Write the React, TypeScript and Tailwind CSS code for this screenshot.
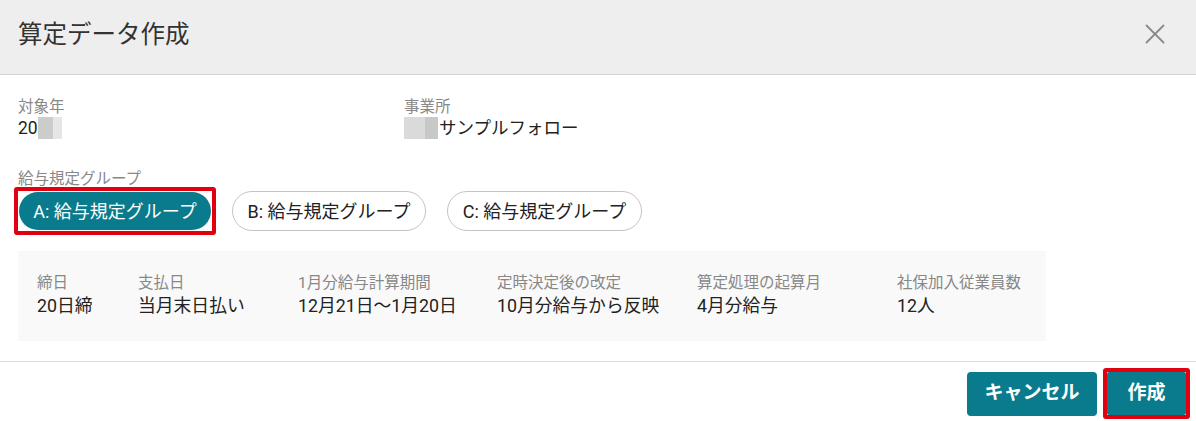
import { X } from 'lucide-react';

const font = { fontFamily: 'Roboto, "Noto Sans CJK JP", sans-serif' };

const details = [
  { label: '締日', value: '20日締', w: 'w-[101px]' },
  { label: '支払日', value: '当月末日払い', w: 'w-[160px]' },
  { label: '1月分給与計算期間', value: '12月21日〜1月20日', w: 'w-[199px]' },
  { label: '定時決定後の改定', value: '10月分給与から反映', w: 'w-[200px]' },
  { label: '算定処理の起算月', value: '4月分給与', w: 'w-[200px]' },
  { label: '社保加入従業員数', value: '12人', w: 'w-[140px]' },
];

export default function App() {
  return (
    <div className="w-[1196px] h-[421px] bg-white overflow-hidden" style={font}>
      <header className="h-[75px] bg-[#eeeeee] border-b border-[#d4d4d4] flex items-center justify-between pl-[18px] pr-[24px]">
        <h1 className="text-[24.5px] text-[#333] leading-none -mt-[3px]">算定データ作成</h1>
        <X size={34} strokeWidth={1.3} className="text-[#8a8a8a] -mt-[6px]" />
      </header>

      <div className="px-[18px] pt-[22px]">
        <div className="flex">
          <div className="w-[386px]">
            <div className="text-[15.5px] leading-[20px] text-[#888]">対象年</div>
            <div className="flex items-center text-[17.5px] leading-[22px] text-[#222]">
              20
              <span className="w-[15px] h-[22px] bg-[#cccccc]" />
              <span className="w-[9px] h-[22px] bg-[#e6e6e6]" />
            </div>
          </div>
          <div>
            <div className="text-[15.5px] leading-[20px] text-[#888]">事業所</div>
            <div className="flex items-center text-[17.5px] leading-[22px] text-[#222]">
              <span className="w-[21px] h-[22px] bg-[#dadada]" />
              <span className="w-[13px] h-[22px] bg-[#c8c8c8] mr-[1px]" />
              サンプルフォロー
            </div>
          </div>
        </div>

        <div className="mt-[30px] text-[15.5px] leading-[20px] text-[#888]">給与規定グループ</div>
        <div className="flex items-center -mt-[2px] -ml-[4px]">
          <div className="border-[4px] border-[#e0000f] rounded-[3px] p-[1px]">
            <button className="h-[38px] w-[192px] rounded-full bg-[#097b8c] text-white text-[18px]">A: 給与規定グループ</button>
          </div>
          <button className="ml-[16px] h-[40px] w-[194px] rounded-full border border-[#c4c4c4] bg-white text-[#222] text-[18px]">B: 給与規定グループ</button>
          <button className="ml-[21px] h-[40px] w-[195px] rounded-full border border-[#c4c4c4] bg-white text-[#222] text-[18px]">C: 給与規定グループ</button>
        </div>

        <div className="mt-[16px] w-[1028px] h-[90px] bg-[#f9f9f9] flex items-center pl-[19px]">
          {details.map((d) => (
            <div key={d.label} className={d.w}>
              <div className="text-[15.5px] leading-[20px] text-[#888]">{d.label}</div>
              <div className="text-[17.8px] leading-[26px] text-[#222] whitespace-nowrap">{d.value}</div>
            </div>
          ))}
        </div>
      </div>

      <div className="mt-[20px] border-t border-[#dcdcdc] flex justify-end items-center gap-[6px] pt-[6px] pr-[6px]">
        <button className="w-[130px] h-[44px] rounded-[4px] bg-[#097b8c] text-white text-[19px] font-bold">キャンセル</button>
        <div className="border-[4px] border-[#e0000f] rounded-[3px]">
          <button className="block w-[79px] h-[43px] rounded-[2px] bg-[#097b8c] text-white text-[19px] font-bold">作成</button>
        </div>
      </div>
    </div>
  );
}
